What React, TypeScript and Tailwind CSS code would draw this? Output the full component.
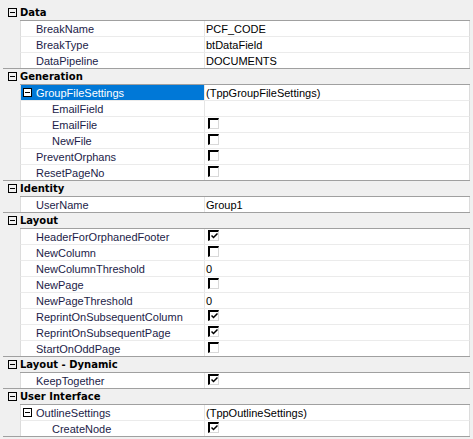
import React from "react";

type Row = {
  n: string;
  v?: string;
  cb?: boolean;
  level?: number;
  expand?: boolean;
  selected?: boolean;
};

const cats: { name: string; rows: Row[] }[] = [
  {
    name: "Data",
    rows: [
      { n: "BreakName", v: "PCF_CODE" },
      { n: "BreakType", v: "btDataField" },
      { n: "DataPipeline", v: "DOCUMENTS" },
    ],
  },
  {
    name: "Generation",
    rows: [
      { n: "GroupFileSettings", v: "(TppGroupFileSettings)", expand: true, selected: true },
      { n: "EmailField", v: "", level: 1 },
      { n: "EmailFile", cb: false, level: 1 },
      { n: "NewFile", cb: false, level: 1 },
      { n: "PreventOrphans", cb: false },
      { n: "ResetPageNo", cb: false },
    ],
  },
  { name: "Identity", rows: [{ n: "UserName", v: "Group1" }] },
  {
    name: "Layout",
    rows: [
      { n: "HeaderForOrphanedFooter", cb: true },
      { n: "NewColumn", cb: false },
      { n: "NewColumnThreshold", v: "0" },
      { n: "NewPage", cb: false },
      { n: "NewPageThreshold", v: "0" },
      { n: "ReprintOnSubsequentColumn", cb: true },
      { n: "ReprintOnSubsequentPage", cb: true },
      { n: "StartOnOddPage", cb: false },
    ],
  },
  { name: "Layout - Dynamic", rows: [{ n: "KeepTogether", cb: true }] },
  {
    name: "User Interface",
    rows: [
      { n: "OutlineSettings", v: "(TppOutlineSettings)", expand: true },
      { n: "CreateNode", cb: true, level: 1 },
    ],
  },
];

function MinusBox({ white }: { white?: boolean }) {
  return (
    <div
      className={`relative w-[9px] h-[9px] border border-black shrink-0 ${white ? "bg-white" : ""}`}
    >
      <div className="absolute left-[1px] top-[3px] w-[5px] h-[1px] bg-black" />
    </div>
  );
}

function CheckBox({ checked }: { checked: boolean }) {
  return (
    <div className="ml-[2px] mt-[1px] w-[11px] h-[11px] border-t-2 border-l-2 border-black border-r border-b border-r-[#d8d8d8] border-b-[#d8d8d8] bg-white relative">
      {checked && (
        <svg className="absolute left-[1px] top-[1px]" width="7" height="6" viewBox="0 0 7 6">
          <path d="M0.5 2.5 L2.5 4.5 L6.5 0.5" stroke="#000" strokeWidth="1.5" fill="none" />
        </svg>
      )}
    </div>
  );
}

function Header({ name }: { name: string }) {
  return (
    <div className="flex h-4 pl-[3px] pr-[3px]">
      <div className="w-[17px] shrink-0 flex items-start pt-[3px] pl-[5px]">
        <MinusBox />
      </div>
      <div
        className="flex-1 border-b border-[#a0a0a0] font-bold text-[10px] leading-[15px] text-black"
        style={{ fontFamily: '"DejaVu Sans", Verdana, sans-serif' }}
      >
        {name}
      </div>
    </div>
  );
}

function Prop({ row, last }: { row: Row; last: boolean }) {
  const indent = row.level ? "pl-[31px]" : row.expand ? "pl-[2px]" : "pl-[15px]";
  return (
    <div className="flex h-4 pl-[3px] pr-[3px]">
      <div className={`flex flex-1 ${last ? "border-b border-[#a0a0a0]" : ""}`}>
        <div className="w-[17px] shrink-0" />
        <div
          className={`flex flex-1 bg-white border-l border-l-[#dcdcdc] border-r border-r-[#dcdcdc] ${
            last ? "" : "border-b border-b-[#ebebeb]"
          }`}
        >
          <div
            className={`w-[184px] shrink-0 flex items-start border-r border-r-[#e6e6e6] ${indent} ${
              row.selected ? "bg-[#0078d7] text-white" : "text-[#1c1c48]"
            }`}
          >
            {row.expand && (
              <div className="pt-[3px] pr-[4px]">
                <MinusBox white />
              </div>
            )}
            <span className="leading-[16px] whitespace-nowrap">{row.n}</span>
          </div>
          <div className="flex-1 flex items-start pl-[1px] text-black">
            {row.cb !== undefined ? (
              <CheckBox checked={row.cb} />
            ) : (
              <span className="leading-[16px] whitespace-nowrap">{row.v}</span>
            )}
          </div>
        </div>
      </div>
    </div>
  );
}

export default function App() {
  return (
    <div
      className="w-[473px] h-[439px] bg-[#f0f0f0] overflow-hidden pt-[5px] text-[11px]"
      style={{ fontFamily: '"Liberation Sans", Arial, sans-serif' }}
    >
      {cats.map((c) => (
        <div key={c.name}>
          <Header name={c.name} />
          {c.rows.map((r, i) => (
            <Prop key={r.n} row={r} last={i === c.rows.length - 1} />
          ))}
        </div>
      ))}
    </div>
  );
}
